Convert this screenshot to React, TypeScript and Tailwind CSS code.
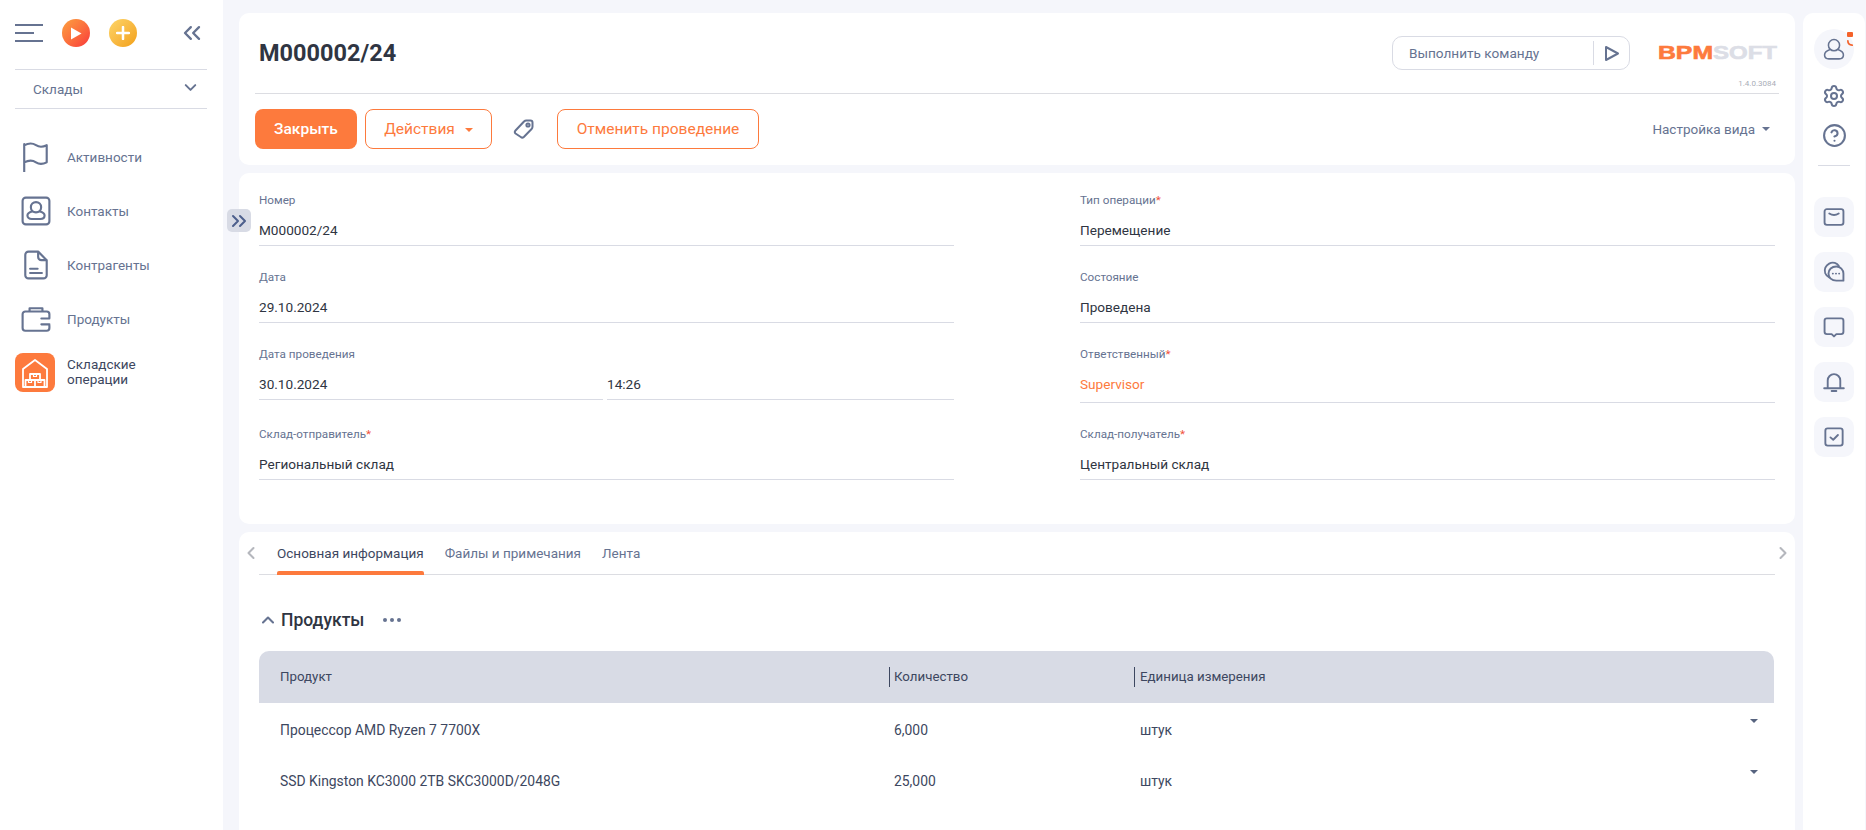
import { ChevronDown, ChevronLeft, ChevronRight, ChevronUp, ChevronsLeft, ChevronsRight, Settings, CircleHelp } from "lucide-react";
import type { ReactNode } from "react";

const ICON = "#667391";

function Caret({ className = "" }: { className?: string }) {
  return <span className={`inline-block w-0 h-0 border-x-[4px] border-x-transparent border-t-[4px] ${className}`} />;
}

function Svg({ size, children, className = "", weight = 2 }: { size: number; children: ReactNode; className?: string; weight?: number }) {
  return (
    <svg width={size} height={size} viewBox="0 0 28 28" fill="none" stroke={ICON} strokeWidth={weight} strokeLinecap="round" strokeLinejoin="round" className={className}>
      {children}
    </svg>
  );
}

const navItems: { label: string; icon: ReactNode }[] = [
  {
    label: "Активности",
    icon: (
      <Svg size={30}>
        <path d="M3 28V2M3 3c4-2 8-2 11 0s6 2 10 0v16c-4 2-7 2-10 0s-7-2-11 0" />
      </Svg>
    ),
  },
  {
    label: "Контакты",
    icon: (
      <Svg size={30}>
        <rect x="1.5" y="1.5" width="25" height="25" rx="3" />
        <circle cx="14" cy="10.5" r="4.8" />
        <path d="M10.5 14.5c-3 .7-4.5 2.2-4.5 3.8s1.500 3.200 4 3.200h8c2.500 0 4-1.500 4-3.200s-1.500-3.100-4.500-3.800" />
      </Svg>
    ),
  },
  {
    label: "Контрагенты",
    icon: (
      <Svg size={30}>
        <path d="M16 1.500H7a3 3 0 0 0-3 3v19a3 3 0 0 0 3 3h14a3 3 0 0 0 3-3V9.500zM16 1.500v5a3 3 0 0 0 3 3h5M8.500 17.500h7M8.500 21.500h11" />
      </Svg>
    ),
  },
  {
    label: "Продукты",
    icon: (
      <Svg size={30}>
        <path d="M8 7V4h12v3M4 7h20a2.500 2.500 0 0 1 2.500 2.500V13M26.500 20v2.500A2.500 2.500 0 0 1 24 25H4a2.500 2.500 0 0 1-2.500-2.500v-13A2.500 2.500 0 0 1 4 7M26.500 13.500H19M26.500 19H19" />
      </Svg>
    ),
  },
];

function Sidebar() {
  return (
    <aside className="w-[223px] shrink-0 bg-white h-full flex flex-col px-[15px] pt-[24px]">
      <div className="flex items-center h-[18px]">
        <div className="w-[28px] flex flex-col gap-[6px]">
          <div className="h-[2px] bg-[#667391] w-full" />
          <div className="h-[2px] bg-[#667391] w-[19px]" />
          <div className="h-[2px] bg-[#667391] w-full" />
        </div>
        <div className="ml-[19px] w-[28px] h-[28px] rounded-full bg-linear-to-br from-[#fb9f3f] to-[#f8303a] flex items-center justify-center">
          <svg width="12" height="13" viewBox="0 0 12 13"><path d="M1 .5v12l10.500-6z" fill="#fff" /></svg>
        </div>
        <div className="ml-[19px] w-[28px] h-[28px] rounded-full bg-linear-to-br from-[#fdd566] to-[#f2a00c] flex items-center justify-center">
          <svg width="14" height="14" viewBox="0 0 14 14"><path d="M7 1v12M1 7h12" stroke="#fff" strokeWidth="2.500" strokeLinecap="round" /></svg>
        </div>
        <ChevronsLeft size={28} color={ICON} strokeWidth={2} className="ml-[41px]" />
      </div>
      <div className="mt-[27px] w-[192px] h-[40px] border-y border-[#d9dbe4] flex items-center justify-between pl-[18px] pr-[7px] text-[13.500px] text-[#667391]">
        <span>Склады</span>
        <ChevronDown size={19} color={ICON} strokeWidth={2.500} className="-mt-[3px]" />
      </div>
      <nav className="mt-[21px] flex flex-col">
        {navItems.map((n) => (
          <div key={n.label} className="flex items-center h-[54px]">
            <div className="w-[52px] pl-[6px] shrink-0">{n.icon}</div>
            <span className="text-[13.500px] text-[#667391]">{n.label}</span>
          </div>
        ))}
        <div className="flex items-center mt-[7px]">
          <div className="w-[40px] h-[39px] rounded-[8px] bg-[#fd7a3d] shrink-0 flex items-center justify-center">
            <svg width="34" height="34" viewBox="0 0 34 34" fill="none" stroke="#fff" strokeWidth="1.800" strokeLinejoin="round">
              <path d="M5 31V13L17 4l12 9v18zM1.500 14" />
              <path d="M12 18h10v6H12zM7.500 24h9.500v7H7.500zM17 24h9.500v7H17z" />
              <path d="M15.500 18v2.500h3V18M10.500 24v2.500h3V24M20 24v2.500h3V24" strokeWidth="1.200" />
            </svg>
          </div>
          <span className="ml-[12px] pb-[1px] text-[13.500px] leading-[15px] text-[#3d4760]">Складские<br />операции</span>
        </div>
      </nav>
    </aside>
  );
}

function Logo() {
  return (
    <svg width="120" height="18" viewBox="0 0 120 18" overflow="visible" className="mr-[1px]">
      <text x="0" y="15" fontFamily="Liberation Sans, sans-serif" fontWeight="700" fontSize="18" fill="#fd7a3d" stroke="#fd7a3d" strokeWidth="0.6" textLength="55" lengthAdjust="spacingAndGlyphs">BPM</text>
      <text x="55" y="15" fontFamily="Liberation Sans, sans-serif" fontWeight="700" fontSize="18" fill="#dcdee6" stroke="#dcdee6" strokeWidth="0.6" textLength="64" lengthAdjust="spacingAndGlyphs">SOFT</text>
    </svg>
  );
}

function HeaderCard() {
  return (
    <section className="h-[152px] bg-white rounded-[10px] px-[16px] shrink-0">
      <div className="h-[81px] border-b border-[#dcdde2] flex items-start">
        <h1 className="ml-[4px] mt-[24px] text-[23.500px] leading-[32px] font-bold text-[#2f3542]">M000002/24</h1>
        <div className="ml-auto mt-[23px] w-[238px] h-[34px] rounded-[10px] border border-[#d9dbe4] flex items-center text-[13.600px] text-[#667391]">
          <span className="pl-[16px] flex-1">Выполнить команду</span>
          <div className="w-[36px] h-[24px] border-l border-[#d9dbe4] flex items-center justify-center">
            <svg width="16" height="17" viewBox="0 0 16 17" fill="none"><path d="M2 2v13l12-6.500z" stroke={ICON} strokeWidth="2" strokeLinejoin="round" /></svg>
          </div>
        </div>
        <div className="ml-[28px] w-[121px] mt-[31px] flex flex-col items-end">
          <Logo />
          <span className="mt-[16px] mr-[3px] text-[8px] leading-[12px] text-[#a9adb8]">1.4.0.3084</span>
        </div>
      </div>
      <div className="mt-[15px] flex items-center">
        <button className="w-[102px] h-[40px] pt-[1px] rounded-[8px] bg-[#fd7a3d] text-white text-[15.500px] font-medium">Закрыть</button>
        <button className="ml-[8px] w-[127px] h-[40px] pt-[1px] rounded-[8px] border border-[#fd7a3d] text-[#fd7a3d] text-[15.500px] flex items-center justify-center gap-[10px]">
          Действия <Caret className="border-t-[#fd7a3d]" />
        </button>
        <svg width="22" height="22" viewBox="0 0 22 22" fill="none" className="ml-[21px]" stroke={ICON} strokeWidth="2" strokeLinejoin="round">
          <path d="M2.500 12.500 11 3.500q1-.9 2.300-.9h4.200q2 0 2 2v4.200q0 1.300-.9 2.200l-7.800 8q-1.500 1.300-3 0l-5.300-3.500q-1.500-1.300 0-3z" />
          <circle cx="15" cy="7" r="1.600" />
        </svg>
        <button className="ml-[22px] w-[202px] h-[40px] pt-[1px] rounded-[8px] border border-[#fd7a3d] text-[#fd7a3d] text-[15.500px]">Отменить проведение</button>
        <div className="ml-auto mr-[9px] flex items-center gap-[7px] text-[13.500px] text-[#667391]">
          Настройка вида <Caret className="border-t-[#667391]" />
        </div>
      </div>
    </section>
  );
}

function Field({ label, req, value, accent, tall, className = "" }: { label?: string; req?: boolean; value: string; accent?: boolean; tall?: boolean; className?: string }) {
  return (
    <div className={className}>
      <div className="h-[19px] text-[11.700px] leading-[19px] text-[#667391]">
        {label}
        {req && <span className="text-[#f0513c]">*</span>}
      </div>
      <div className={`mt-[7px] flex items-center border-b border-[#d9dbe4] text-[13.600px] ${tall ? "h-[32px] pb-[4px]" : "h-[29px] pb-[1px]"} ${accent ? "text-[#fd7a3d]" : "text-[#2f3542]"}`}>
        {value}
      </div>
    </div>
  );
}

function FormCard() {
  return (
    <section className="relative h-[351px] bg-white rounded-[10px] pl-[20px] pr-[20px] pt-[18px] shrink-0">
      <div className="absolute left-[-12px] top-[36px] w-[24px] h-[23px] rounded-[5px] bg-[#d8dbe5] flex items-center justify-center">
        <ChevronsRight size={24} color="#4d5f8c" strokeWidth={2} />
      </div>
      <div className="grid grid-cols-2 gap-x-[126px]">
        <div className="flex flex-col gap-[22px]">
          <Field label="Номер" value="M000002/24" />
          <Field label="Дата" value="29.10.2024" />
          <div className="flex gap-[4px]">
            <Field label="Дата проведения" value="30.10.2024" className="w-[344px]" />
            <Field label=" " value="14:26" className="flex-1" />
          </div>
          <Field label="Склад-отправитель" req value="Региональный склад" className="mt-[3px]" />
        </div>
        <div className="flex flex-col gap-[22px]">
          <Field label="Тип операции" req value="Перемещение" />
          <Field label="Состояние" value="Проведена" />
          <Field label="Ответственный" req value="Supervisor" accent tall />
          <Field label="Склад-получатель" req value="Центральный склад" />
        </div>
      </div>
    </section>
  );
}

const rows = [
  { name: "Процессор AMD Ryzen 7 7700X", qty: "6,000", unit: "штук" },
  { name: "SSD Kingston KC3000 2TB SKC3000D/2048G", qty: "25,000", unit: "штук" },
];

function ProductsCard() {
  return (
    <section className="flex-1 bg-white rounded-t-[10px] px-[20px] overflow-hidden">
      <div className="relative h-[43px] border-b border-[#dcdde2] flex items-start gap-[21px] pl-[18px] text-[13.500px] text-[#667391]">
        <ChevronLeft size={20} color="#b5b7bd" strokeWidth={2.500} className="absolute left-[-18px] top-[11px]" />
        <div className="relative h-[42px] flex items-center text-[#3d4760]">
          Основная информация
          <div className="absolute left-0 right-0 bottom-[-1px] h-[4px] rounded-t-[2px] bg-[#fd7a3d]" />
        </div>
        <div className="h-[42px] flex items-center">Файлы и примечания</div>
        <div className="h-[42px] flex items-center">Лента</div>
        <ChevronRight size={20} color="#b5b7bd" strokeWidth={2.500} className="absolute right-[-18px] top-[11px]" />
      </div>
      <div className="mt-[33px] h-[24px] flex items-center text-[#2f3542]">
        <ChevronUp size={20} color={ICON} strokeWidth={2.500} className="-ml-[1px]" />
        <h2 className="ml-[3px] text-[17.500px] font-medium">Продукты</h2>
        <svg width="18" height="4" viewBox="0 0 18 4" className="ml-[19px]" fill={ICON}>
          <circle cx="2" cy="2" r="2" /><circle cx="9" cy="2" r="2" /><circle cx="16" cy="2" r="2" />
        </svg>
      </div>
      <div className="mt-[19px] w-[1515px]">
        <div className="h-[52px] rounded-t-[10px] bg-[#d8dbe5] flex items-center text-[13.300px] text-[#3d4760]">
          <div className="w-[630px] pl-[21px]">Продукт</div>
          <div className="w-[245px] pl-[4px] border-l border-[#3d4760] leading-[20px]">Количество</div>
          <div className="flex-1 pl-[5px] border-l border-[#3d4760] leading-[20px]">Единица измерения</div>
        </div>
        {rows.map((r) => (
          <div key={r.name} className="relative h-[51px] flex items-center text-[13.900px] text-[#3d4760] pt-[3px]">
            <div className="w-[630px] pl-[21px]">{r.name}</div>
            <div className="w-[245px] pl-[5px]">{r.qty}</div>
            <div className="flex-1 pl-[6px]">{r.unit}</div>
            <Caret className="absolute right-[16px] top-[16px] border-t-[#56637f]" />
          </div>
        ))}
      </div>
    </section>
  );
}

function RailButton({ children }: { children: ReactNode }) {
  return <div className="w-[40px] h-[40px] rounded-[10px] bg-[#f5f6fb] flex items-center justify-center">{children}</div>;
}

function RightRail() {
  return (
    <aside className="ml-[8px] w-[62px] h-full bg-white rounded-t-[10px] flex flex-col items-center pt-[16px]">
      <div className="relative w-[40px] h-[40px] rounded-full bg-[#f5f6fb] flex items-center justify-center">
        <Svg size={24} weight={1.800}>
          <circle cx="14" cy="9.500" r="6.500" />
          <path d="M9.500 14.500C5 16 3 18.500 3 21s2 4.500 5 4.500h12c3 0 5-2 5-4.500s-2-5-6.500-6.500" />
        </Svg>
        <div className="absolute right-[1px] top-[3px] w-[6px] h-[5px] rounded-[1px] bg-[#f4622a]" />
        <svg width="6" height="6" viewBox="0 0 7 7" className="absolute right-[1px] top-[11px]">
          <path d="M1 1c0 3 2 5 5 5" stroke="#f4622a" strokeWidth="2" fill="none" strokeLinecap="round" />
        </svg>
      </div>
      <Settings size={24} color={ICON} strokeWidth={2} className="mt-[15px]" />
      <CircleHelp size={25} color={ICON} strokeWidth={2} className="mt-[15px]" />
      <div className="mt-[17px] w-[32px] h-px bg-[#d9dbe4]" />
      <div className="mt-[31px] flex flex-col gap-[15px]">
        <RailButton>
          <Svg size={22} weight={2.400}>
            <rect x="2" y="4" width="24" height="20" rx="3" />
            <path d="M8 9.500q6 4 12 0" />
          </Svg>
        </RailButton>
        <RailButton>
          <Svg size={22} weight={2.400}>
            <path d="M8 21C3 18 1 13 3 8.500S10 1 15 2.500c2.500.7 4 2 5 3.500" />
            <path d="M17 7c-6 0-10 4-10 9s4 9 10 9h9v-9c0-5-4-9-9-9z" />
            <path d="M12.500 16h.1M16.500 16h.1M20.500 16h.1" />
          </Svg>
        </RailButton>
        <RailButton>
          <Svg size={22} weight={2.400}>
            <path d="M5 3h18a3 3 0 0 1 3 3v14a3 3 0 0 1-3 3h-6l-3 3-3-3H5a3 3 0 0 1-3-3V6a3 3 0 0 1 3-3z" />
          </Svg>
        </RailButton>
        <RailButton>
          <Svg size={22} weight={2.400}>
            <path d="M6 21V12a8 8 0 0 1 16 0v9M1.500 22h25M11 25.500h6" />
          </Svg>
        </RailButton>
        <RailButton>
          <Svg size={22} weight={2.400}>
            <rect x="3" y="3" width="22" height="22" rx="3" />
            <path d="M9.500 14.500l3.500 3 6-6" />
          </Svg>
        </RailButton>
      </div>
    </aside>
  );
}

export default function App() {
  return (
    <div className="w-[1866px] h-[830px] overflow-hidden bg-[#f5f6fb] flex font-['Roboto',sans-serif]">
      <Sidebar />
      <main className="ml-[16px] w-[1556px] h-full pt-[13px] flex flex-col gap-[8px]">
        <HeaderCard />
        <FormCard />
        <ProductsCard />
      </main>
      <div className="h-full pt-[13px]">
        <RightRail />
      </div>
    </div>
  );
}
